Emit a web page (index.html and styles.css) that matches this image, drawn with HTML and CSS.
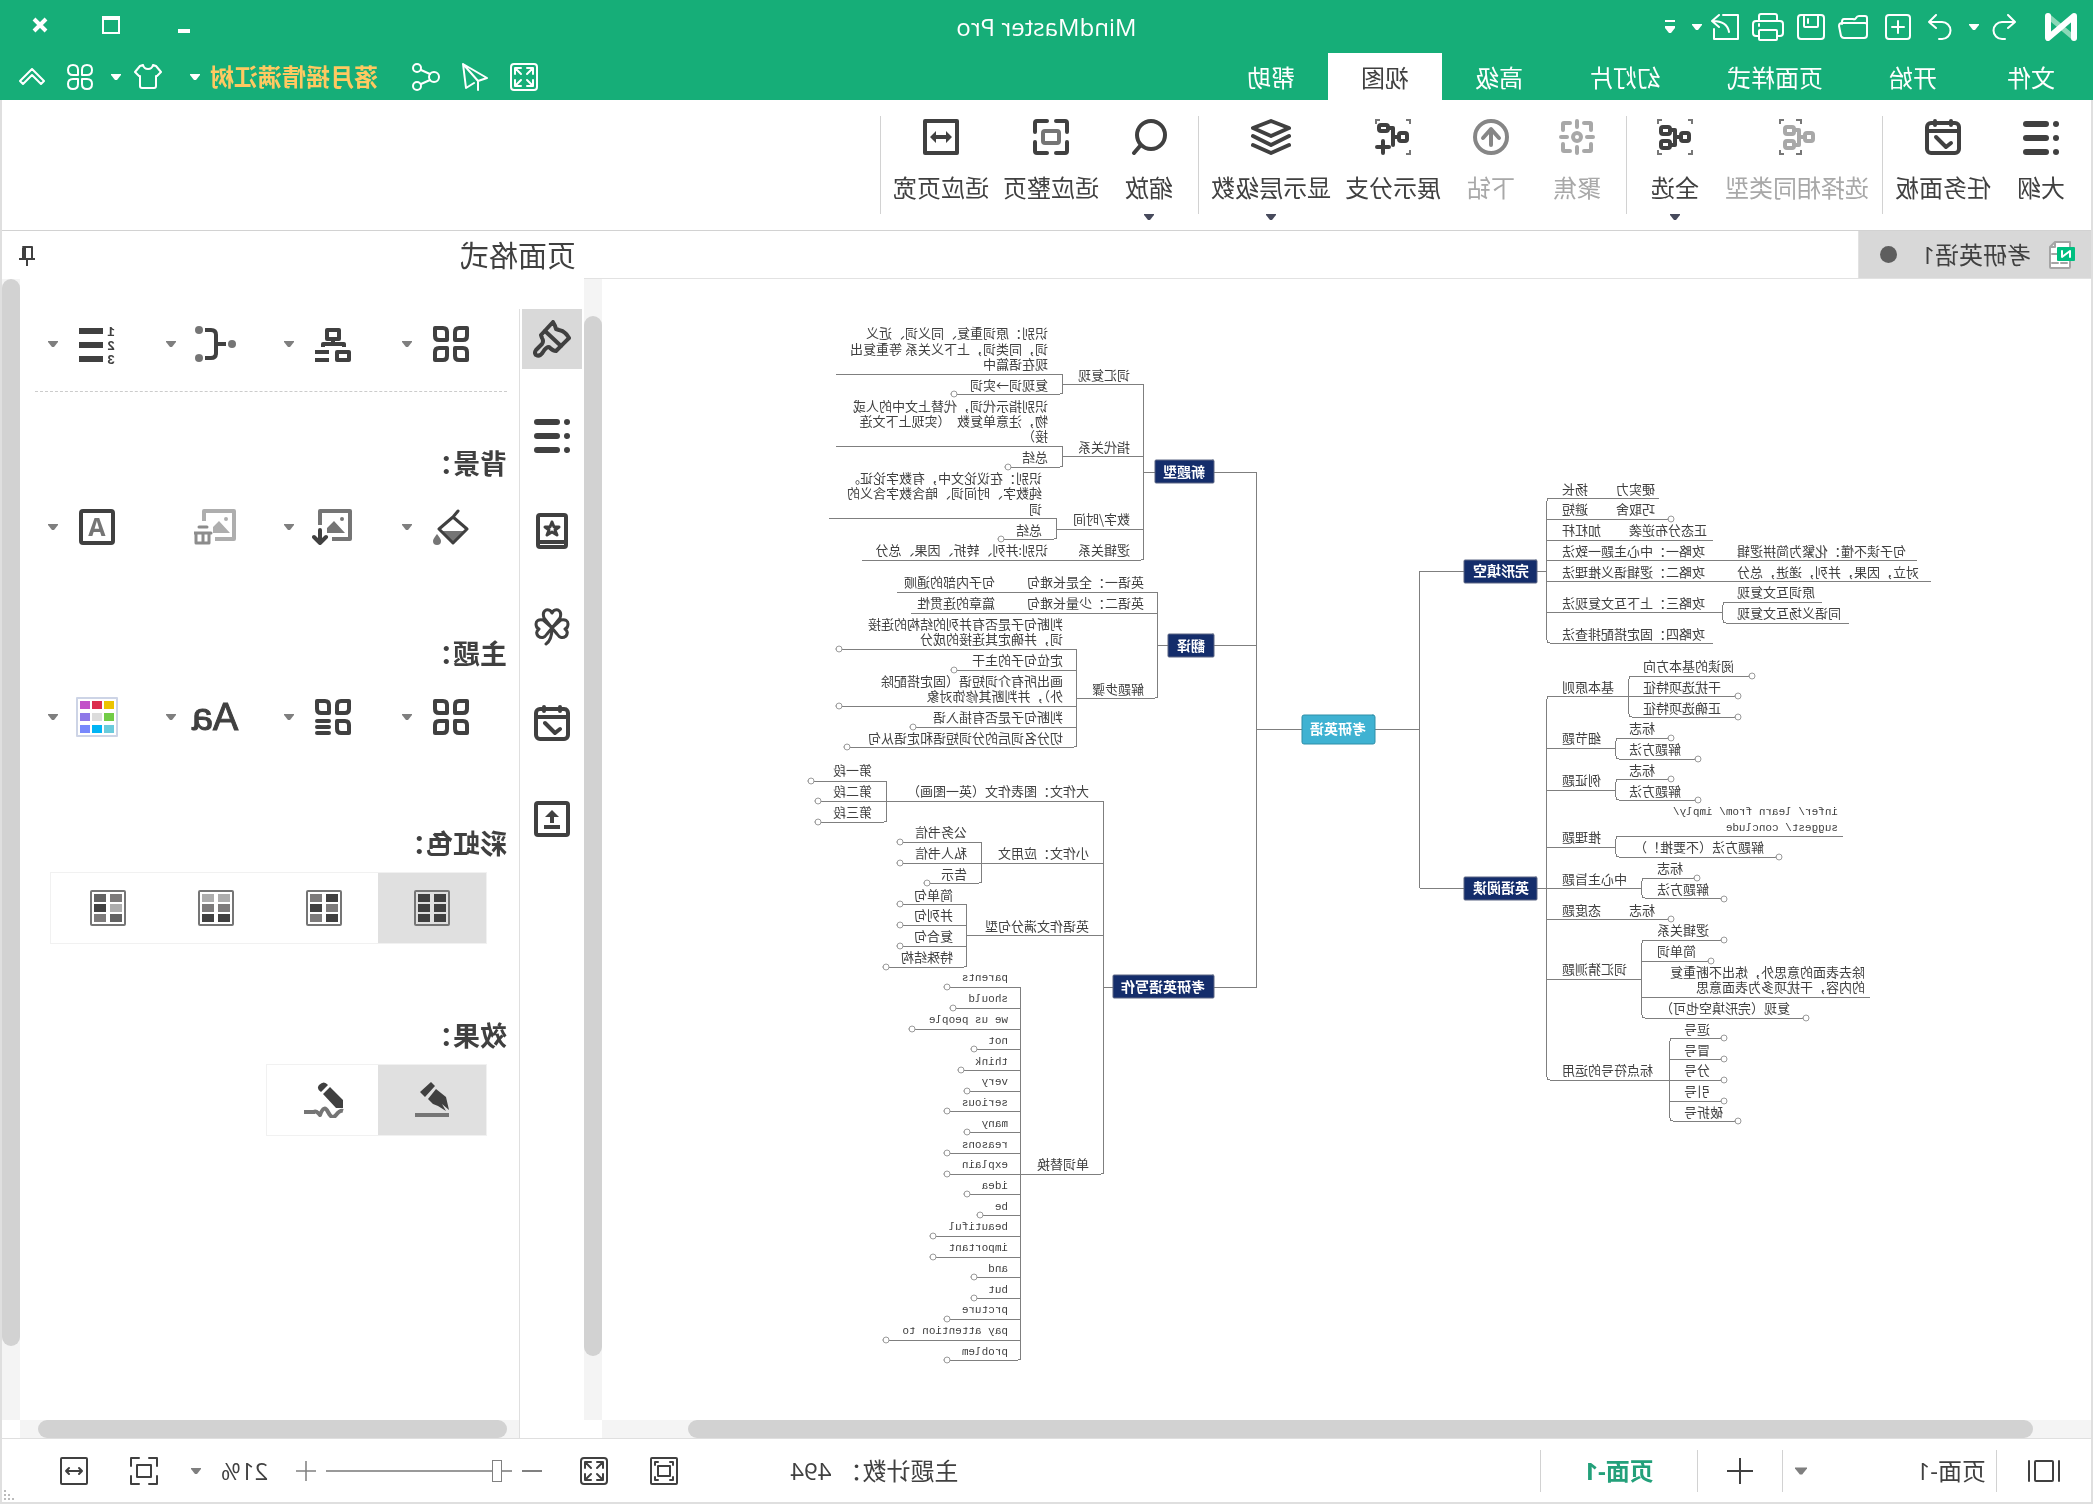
FILE: index.html
```html
<!DOCTYPE html>
<html lang="zh-CN">
<head>
<meta charset="utf-8">
<title>MindMaster Pro</title>
<link rel="stylesheet" href="styles.css">
</head>
<body>
<svg class="sprite" aria-hidden="true">
  <symbol id="caret" viewBox="0 0 10 6"><path d="M0 0H10V1L6 6H4L0 1Z" fill="currentColor"/></symbol>
  <symbol id="undo" viewBox="0 0 24 26"><path d="M8 1L1 8L8 14M1 8H14A8 8 0 0 1 14 25H11" /></symbol>
  <symbol id="redo" viewBox="0 0 24 26"><path d="M16 1L23 8L16 14M23 8H10A8 8 0 0 0 10 25H13" /></symbol>
  <symbol id="new" viewBox="0 0 26 26"><rect x="1" y="1" width="24" height="24" rx="3"/><path d="M13 7V19M7 13H19"/></symbol>
  <symbol id="open" viewBox="0 0 30 26"><path d="M1 11V4Q1 2 3 2H9Q11 2 12 4T15 5H24Q26 5 26 8V10M1 11Q1 9 3 9H26Q29 9 29 12L27 22Q26 24 24 24H4Q1 24 1 21Z"/></symbol>
  <symbol id="save" viewBox="0 0 28 26"><rect x="1" y="1" width="26" height="24" rx="3"/><path d="M7 1V12Q7 13 8 13H20Q21 13 21 12V1M17 5V9"/></symbol>
  <symbol id="print" viewBox="0 0 32 28"><path d="M7 8V3Q7 1 9 1H23Q25 1 25 3V8M7 23H4Q1 23 1 20V11Q1 8 4 8H28Q31 8 31 11V20Q31 23 28 23H25M25 11V13"/><rect x="7" y="17" width="18" height="10" rx="1"/></symbol>
  <symbol id="export" viewBox="0 0 28 26"><path d="M16 1H1V25H25V15M20 1L27 7L20 13M26 7Q12 7 10 18"/></symbol>
  <symbol id="fullscreen" viewBox="0 0 28 28"><rect x="1" y="1" width="26" height="26" rx="3"/><path d="M5 11V5H11M5 5L11 11M17 5H23V11M23 5L17 11M5 17V23H11M5 23L11 17M23 17V23H17M23 23L17 17"/></symbol>
  <symbol id="plane" viewBox="0 0 26 28"><path d="M25 1L1 15L10 18V27M25 1L22 25L14 20M25 1L10 18"/></symbol>
  <symbol id="share" viewBox="0 0 28 28"><circle cx="6" cy="14" r="5"/><circle cx="23" cy="5" r="4"/><circle cx="23" cy="23" r="4"/><path d="M10 11L19 7M10 17L19 21"/></symbol>
  <symbol id="shirt" viewBox="0 0 28 26"><path d="M9 1Q10 5 14 5T19 1L22 2L27 8L23 12H22V22Q22 24 20 24H8Q6 24 6 22V12H5L1 8L6 2Z"/></symbol>
  <symbol id="petals" viewBox="0 0 26 26"><path d="M11 11V6Q11 1 6 1T1 6T6 11ZM15 11V6Q15 1 20 1T25 6T20 11ZM11 15V20Q11 25 6 25T1 20T6 15ZM15 15V20Q15 25 20 25T25 20T20 15Z"/></symbol>
  <symbol id="collapse" viewBox="0 0 26 18"><path d="M1 13L13 1L25 13L22 16L13 7L4 16Z"/></symbol>

  <symbol id="outline" viewBox="0 0 36 36"><path d="M13 5H33M13 19H33M13 33H33" stroke-width="6"/><g class="solid"><circle cx="3" cy="5" r="3"/><circle cx="3" cy="19" r="3"/><circle cx="3" cy="33" r="3"/></g></symbol>
  <symbol id="calendar" viewBox="0 0 36 36"><rect x="2" y="4" width="32" height="30" rx="4"/><path d="M2 12H34M10 2V6M26 2V6M10 24L15 28L25 18"/></symbol>
  <symbol id="same" viewBox="0 0 36 36"><path class="thin" d="M14 5V1H19M31 1H35V5M14 31V35H19M31 35H35V31"/><rect x="2" y="14" width="8" height="8" rx="2"/><rect x="21" y="8" width="9" height="7" rx="2"/><rect x="21" y="22" width="9" height="7" rx="2"/><path d="M10 18H16M21 11H16V26H21"/></symbol>
  <symbol id="all" viewBox="0 0 36 36"><path class="thin" d="M1 5V1H5M31 1H35V5M1 31V35H5M31 35H35V31"/><rect x="4" y="14" width="8" height="8" rx="2"/><rect x="23" y="8" width="9" height="7" rx="2"/><rect x="23" y="22" width="9" height="7" rx="2"/><path d="M12 18H18M23 11H18V26H23"/></symbol>
  <symbol id="focus" viewBox="0 0 36 36"><path d="M4 11V5Q4 4 5 4H11M25 4H31Q32 4 32 5V11M4 25V31Q4 32 5 32H11M25 32H31Q32 32 32 31V25M18 2V8M18 28V34M2 18H8M28 18H34"/><circle cx="18" cy="18" r="4"/></symbol>
  <symbol id="drill" viewBox="0 0 36 36"><circle cx="18" cy="18" r="16"/><path d="M18 26V11M10 19L18 10L26 19"/></symbol>
  <symbol id="branches" viewBox="0 0 36 36"><path class="thin" d="M1 5V1H5M31 1H35V5M1 31V35H5"/><rect x="4" y="14" width="8" height="8" rx="2"/><rect x="23" y="6" width="9" height="6" rx="2"/><path d="M12 18H18M23 9H18V26M28 22V34M22 28H34"/></symbol>
  <symbol id="layers" viewBox="0 0 40 36"><path d="M20 2L38 9L20 17L2 9ZM2 17L20 26L38 17M2 26L20 34L38 26"/></symbol>
  <symbol id="magnifier" viewBox="0 0 36 36"><circle cx="16" cy="16" r="14"/><path d="M27 27L33 34"/></symbol>
  <symbol id="fitpage" viewBox="0 0 36 36"><path d="M2 13V4Q2 2 4 2H13M22 2H32Q34 2 34 4V13M2 23V32Q2 34 4 34H13M22 34H32Q34 34 34 32V23"/><rect class="soft" x="10" y="12" width="16" height="12" rx="2"/></symbol>
  <symbol id="fitwidth" viewBox="0 0 36 36"><rect x="2" y="2" width="32" height="32"/><path d="M11 18H25"/><path class="solid" d="M7 18L13 12V24ZM29 18L23 12V24Z"/></symbol>

  <symbol id="doc" viewBox="0 0 26 28"><path d="M5 1H20L25 6V26Q25 27 24 27H6Q5 27 5 26Z" fill="#fff" stroke="#a5a5a5" stroke-width="2"/><path d="M8 22H14M17 22H23M18 13H23M20 2V6H24" stroke="#a5a5a5" stroke-width="2" fill="none"/><rect y="6" width="18" height="14" rx="1" fill="#00bf80" stroke="none"/><path d="M5 16V10L13 16V10" fill="none" stroke="#fff" stroke-width="2"/></symbol>
  <symbol id="pin" viewBox="0 0 16 20"><path d="M3 1H12M3 1V12M0 13H16M8 14V20" stroke-width="2"/><path d="M11 2V12" stroke-width="4" stroke-linecap="butt"/></symbol>

  <symbol id="brush" viewBox="0 0 38 38"><path d="M18 2Q16 5 15 9L12 10Q6 11 2 18L15 31Q18 31 22 27Q25 27 28 32Q31 37 35 35Q37 33 35 30L29 24Q27 21 29 18L30 15Z"/><path d="M26 11L10 26"/></symbol>
  <symbol id="book" viewBox="0 0 32 36"><rect x="2" y="2" width="28" height="32" rx="2"/><path d="M2 29H30"/><path d="M16 9L18 14H23L19 17L21 22L16 19L11 22L13 17L9 14H14Z" stroke-width="3"/></symbol>
  <symbol id="clover" viewBox="0 0 36 38"><path stroke-width="3" d="M18 20L10 10Q8 4 12 2Q16 1 18 5Q20 1 24 2Q28 4 26 10ZM18 20L9 12Q2 11 2 16Q2 20 5 21Q1 24 4 28Q9 32 13 26ZM18 20L27 12Q34 11 34 16Q34 20 31 21Q35 24 32 28Q27 32 23 26ZM18 20Q18 32 24 36"/></symbol>
  <symbol id="upload" viewBox="0 0 36 36"><rect x="2" y="2" width="32" height="32" rx="2"/><path d="M18 22V14M10 26H26" stroke-linecap="butt"/><path class="solid" d="M18 9L25 16H11Z"/></symbol>

  <symbol id="tiles" viewBox="0 0 36 36"><path d="M2 2H10Q14 2 14 6V14H6Q2 14 2 10ZM34 2H26Q22 2 22 6V14H30Q34 14 34 10ZM2 34H10Q14 34 14 30V22H6Q2 22 2 26ZM34 34H26Q22 34 22 30V22H30Q34 22 34 26Z"/></symbol>
  <symbol id="tilebars" viewBox="0 0 36 36"><path d="M2 2H10Q14 2 14 6V14H6Q2 14 2 10ZM34 2H26Q22 2 22 6V14H30Q34 14 34 10ZM2 34H10Q14 34 14 30V22H6Q2 22 2 26ZM22 22H34M22 28H34M22 34H34"/></symbol>
  <symbol id="tree" viewBox="0 0 36 36"><g stroke-linecap="butt"><rect x="12" y="4" width="12" height="9"/><path d="M18 13V18M7 21V18H28V21M22 26H36M22 34H36"/><rect x="2" y="26" width="12" height="8"/></g></symbol>
  <symbol id="bracket" viewBox="0 0 42 36"><path d="M10 18H20M31 4H25Q20 4 20 9V27Q20 32 25 32H31" stroke-linecap="butt"/><g class="softsolid"><circle cx="4" cy="18" r="4"/><circle cx="37" cy="4" r="4"/><circle cx="37" cy="32" r="4"/></g></symbol>
  <symbol id="numbers" viewBox="0 0 36 40"><path d="M12 7H36M12 21H36M12 35H36" stroke-width="6" stroke-linecap="butt"/><g class="digits"><text x="0" y="12">1</text><text x="0" y="26">2</text><text x="0" y="40">3</text></g></symbol>
  <symbol id="bucket" viewBox="0 0 36 36"><path class="softsolid" d="M4 22H28L16 34Z"/><path d="M16 8L30 20L16 34L2 20ZM16 8L11 2" stroke-width="3"/><path class="softsolid" d="M32 25Q36 30 36 32A4 4 0 0 1 28 32Q28 30 32 25Z"/></symbol>
  <symbol id="imagein" viewBox="0 0 42 36"><g class="soft"><path d="M22 30H4V2H34V16" stroke-linecap="butt"/></g><path class="softsolid" d="M9 24L20 12L27 19V24ZM10 10A2 2 0 0 1 14 10A2 2 0 0 1 10 10Z"/><path d="M34 21V34M28 28L34 34L40 28"/></symbol>
  <symbol id="imagedel" viewBox="0 0 42 36"><g opacity=".7"><path d="M21 30H2V2H32V12" stroke-linecap="butt"/><path class="solid" d="M6 24L17 12L23 18V24ZM8 10A2 2 0 0 1 12 10A2 2 0 0 1 8 10Z"/></g><path d="M29 18H37M25 24H42M27 24V34H40V24M33 24V34" stroke-width="3"/></symbol>
  <symbol id="abox" viewBox="0 0 36 36"><rect x="2" y="2" width="32" height="32" rx="2"/><text class="letter" x="18" y="27" text-anchor="middle">A</text></symbol>
  <symbol id="palette" viewBox="0 0 42 40"><rect x="1" y="1" width="40" height="38" fill="#fff" stroke="#cdd4e6" stroke-width="2"/><g stroke="none"><path fill="#ecc400" d="M4 4h10v8H4z"/><path fill="#dc2e4e" d="M16 4h10v8H16z"/><path fill="#c250c8" d="M28 4h10v8H28z"/><path fill="#72cc46" d="M4 16h10v8H4z"/><path fill="#dcdcdc" d="M16 16h10v8H16z"/><path fill="#8f78e8" d="M28 16h10v8H28z"/><path fill="#6acbdc" d="M4 28h10v8H4z"/><path fill="#00b4f5" d="M16 28h10v8H16z"/><path fill="#7888fc" d="M28 28h10v8H28z"/></g></symbol>
  <symbol id="frame" viewBox="0 0 36 36"><rect x="1" y="1" width="34" height="34" rx="1" stroke="#757575" stroke-width="2"/></symbol>
  <symbol id="pen" viewBox="0 0 36 36"><path class="solid" d="M19 0L30 10L25 15L15 4ZM14 7L22 17L17 22L12 24L4 29L8 22L1 28L4 15Z"/><path class="soft" d="M1 33H35" stroke-linecap="butt"/></symbol>
  <symbol id="pencil" viewBox="0 0 40 36"><path class="solid" d="M16 3Q20 -2 25 3Q28 7 23 10ZM14 5L21 12L8 26H1V18Z"/><path class="soft" d="M1 29Q4 28 8 33T16 30T24 33Q28 28 30 30H40" stroke-linecap="butt"/></symbol>

  <symbol id="pages" viewBox="0 0 32 22"><rect x="7" y="1" width="18" height="20" rx="1"/><path d="M1 1V21M31 1V21"/></symbol>
  <symbol id="plus" viewBox="0 0 26 26"><path d="M13 0V26M0 13H26"/></symbol>
  <symbol id="minus" viewBox="0 0 20 20"><path d="M0 10H20"/></symbol>
  <symbol id="fit28" viewBox="0 0 28 28"><path d="M1 9V1H9M19 1H27V9M1 19V27H9M19 27H27V19"/><rect x="7" y="8" width="14" height="12"/></symbol>
  <symbol id="present" viewBox="0 0 28 28"><rect x="1" y="1" width="26" height="26" rx="1"/><path d="M5 8V5H8M20 5H23V8M5 20V23H8M20 23H23V20"/><rect x="8" y="9" width="12" height="10"/></symbol>
  <symbol id="width28" viewBox="0 0 28 28"><rect x="1" y="1" width="26" height="26" rx="1"/><path d="M6 14H22M9 11L6 14L9 17M19 11L22 14L19 17"/></symbol>
</svg>

<div class="window">
  <header class="titlebar">
    <div class="toprow">
      <div class="quick">
        <svg class="logo" viewBox="0 0 32 28" width="32" height="28" aria-hidden="true"><path d="M3 25L29 3" stroke="#8cd8b8" stroke-width="5"/><path d="M3 25V3L29 25V3" stroke="#fff" stroke-width="6" stroke-linejoin="round" stroke-linecap="round" fill="none"/></svg>
        <button class="q-undo" aria-label="撤销"><svg width="24" height="26"><use href="#undo"/></svg></button>
        <button aria-label="撤销记录"><svg width="10" height="6"><use href="#caret"/></svg></button>
        <button class="q-redo" aria-label="恢复"><svg width="24" height="26"><use href="#redo"/></svg></button>
        <button class="q-new" aria-label="新建"><svg width="26" height="26"><use href="#new"/></svg></button>
        <button aria-label="打开"><svg width="30" height="26"><use href="#open"/></svg></button>
        <button aria-label="保存"><svg width="28" height="26"><use href="#save"/></svg></button>
        <button aria-label="打印"><svg width="32" height="28"><use href="#print"/></svg></button>
        <button class="q-export" aria-label="导出"><svg width="28" height="26"><use href="#export"/></svg></button>
        <button aria-label="导出选项"><svg width="10" height="6"><use href="#caret"/></svg></button>
        <button class="q-more" aria-label="自定义工具栏"><svg width="10" height="14" viewBox="0 0 10 14"><path d="M0 6H10V8L6 13H4L0 8Z" fill="#fff" class="nostroke"/><path d="M0 1H10"/></svg></button>
      </div>
      <h1>MindMaster Pro</h1>
      <div class="winctl">
        <button class="min" aria-label="最小化"><svg width="12" height="22" viewBox="0 0 12 22"><path d="M0 15H12V19H0Z" fill="#fff" class="nostroke"/></svg></button>
        <button aria-label="最大化"><svg width="18" height="18" viewBox="0 0 18 18"><path d="M0 0H18V18H0ZM2 4V16H16V4Z" fill="#fff" fill-rule="evenodd" class="nostroke"/></svg></button>
        <button aria-label="关闭"><svg width="16" height="16" viewBox="0 0 16 16"><path d="M2 2L14 14M14 2L2 14" class="heavy"/></svg></button>
      </div>
    </div>
    <div class="tabrow">
      <nav class="tabs">
        <button class="file">文件</button><button>开始</button><button>页面样式</button><button>幻灯片</button><button>高级</button><button class="active">视图</button><button>帮助</button>
      </nav>
      <div class="account">
        <button aria-label="全屏"><svg width="28" height="28"><use href="#fullscreen"/></svg></button>
        <button aria-label="发送"><svg width="26" height="28"><use href="#plane"/></svg></button>
        <button aria-label="分享"><svg width="28" height="28"><use href="#share"/></svg></button>
        <button class="user">落月摇情满江树<svg width="10" height="6"><use href="#caret"/></svg></button>
        <button class="skin" aria-label="皮肤"><svg width="28" height="26"><use href="#shirt"/></svg><svg width="10" height="6"><use href="#caret"/></svg></button>
        <button aria-label="社区"><svg width="26" height="26"><use href="#petals"/></svg></button>
        <button aria-label="收起功能区"><svg width="26" height="18"><use href="#collapse"/></svg></button>
      </div>
    </div>
  </header>

  <div class="frame">
    <div class="ribbon">
      <button><svg width="36" height="36"><use href="#outline"/></svg>大纲</button>
      <button><svg width="36" height="36"><use href="#calendar"/></svg>任务面板</button>
      <i class="rule"></i>
      <button class="off"><svg width="36" height="36"><use href="#same"/></svg>选择相同类型</button>
      <button><svg width="36" height="36"><use href="#all"/></svg>全选<svg class="more" width="10" height="6"><use href="#caret"/></svg></button>
      <i class="rule"></i>
      <button class="off"><svg width="36" height="36"><use href="#focus"/></svg>聚焦</button>
      <button class="off drill"><svg width="36" height="36"><use href="#drill"/></svg>下钻</button>
      <button><svg width="36" height="36"><use href="#branches"/></svg>展示分支</button>
      <button><svg width="40" height="36"><use href="#layers"/></svg>显示层级数<svg class="more" width="10" height="6"><use href="#caret"/></svg></button>
      <i class="rule"></i>
      <button><svg width="36" height="36"><use href="#magnifier"/></svg>缩放<svg class="more" width="10" height="6"><use href="#caret"/></svg></button>
      <button><svg width="36" height="36"><use href="#fitpage"/></svg>适应整页</button>
      <button><svg width="36" height="36"><use href="#fitwidth"/></svg>适应页宽</button>
      <i class="rule"></i>
    </div>

    <div class="workspace">
      <section class="editor">
        <div class="doctabs">
          <button class="doctab"><svg width="26" height="28"><use href="#doc"/></svg><span>考研英语1</span><i class="dot"></i></button>
        </div>
        <div class="view">
          <div class="canvas">
<svg class="map" viewBox="157 279 1180 1141" width="1180" height="1141" role="img" aria-label="考研英语">
  <defs><circle id="k" r="3"/></defs>
  <g class="lines">
    <path d="M718 729H673M673 571V888M673 571H629M673 888H629M556 571H546M556 888H546"/>
    <path d="M791 729H836M879 472H836V987H879M836 645H879M938 472H949M925 645H935M980 987H989"/>
    <path d="M434 498H543Q546 498 546 501V640Q546 643 543 643H380M425 519H546M380 540H546M176 560H546M162 581H546M370 612H546M271 602H367Q370 602 370 605V620Q370 623 367 623H244"/>
    <path d="M358 696H543Q546 696 546 699V1077Q546 1080 543 1080H372M477 748H546M477 790H546M477 847H546M451 888H546M425 919H546M451 979H546"/>
    <path d="M344 676H461Q464 676 464 679V714Q464 717 461 717H358M425 738H474Q477 738 477 741V756Q477 759 474 759H398M425 779H474Q477 779 477 782V797Q477 800 474 800H398M250 836H474Q477 836 477 839V854Q477 857 474 857H317M399 878H448Q451 878 451 881V895Q451 898 448 898H372"/>
    <path d="M372 940H448Q451 940 451 943V1015Q451 1018 448 1018H290M385 961H451M223 997H451M372 1038H420Q423 1038 423 1041V1118Q423 1121 420 1121H358M372 1059H423M372 1101H423"/>
    <path d="M1030 384H952Q949 384 949 387V557Q949 560 952 560H1231M949 456H1030M949 529H1036M1257 374H1033Q1030 374 1030 377V391Q1030 394 1033 394H1136M1257 446H1033Q1030 446 1030 449V464Q1030 467 1033 467H1082M1264 518H1039Q1036 518 1036 521V536Q1036 539 1039 539H1089"/>
    <path d="M1196 592H938Q935 592 935 595V695Q935 698 938 698H1016M935 613H1182M1251 649H1019Q1016 649 1016 652V744Q1016 747 1019 747H1243M1016 670H1136M1016 706H1251M1016 727H1177"/>
    <path d="M1272 801H992Q989 801 989 804V1171Q989 1174 992 1174H1143M989 863H1190M989 935H1126M1279 781H1209Q1206 781 1206 784V819Q1206 822 1209 822H1272M1190 842H1114Q1111 842 1111 845V880Q1111 883 1114 883H1163M1190 904H1129Q1126 904 1126 907V964Q1126 967 1129 967H1204M1126 925H1190M1126 946H1190"/>
    <path d="M1143 987H1075Q1072 987 1072 990V1357Q1072 1360 1075 1360H1143M1072 1008H1137M1072 1029H1178M1072 1049H1116M1072 1070H1129M1072 1091H1123M1072 1111H1143M1072 1132H1123M1072 1153H1143M1072 1194H1123M1072 1215H1110M1072 1236H1157M1072 1257H1157M1072 1277H1116M1072 1298H1116M1072 1319H1143M1072 1340H1204"/>
  </g>
  <g class="knobs">
    <use href="#k" x="422" y="519"/><use href="#k" x="341" y="676"/><use href="#k" x="355" y="696"/><use href="#k" x="355" y="717"/><use href="#k" x="422" y="738"/><use href="#k" x="395" y="759"/><use href="#k" x="422" y="779"/><use href="#k" x="395" y="800"/><use href="#k" x="314" y="857"/><use href="#k" x="396" y="878"/><use href="#k" x="369" y="899"/><use href="#k" x="422" y="919"/><use href="#k" x="369" y="940"/><use href="#k" x="382" y="961"/><use href="#k" x="287" y="1018"/><use href="#k" x="369" y="1038"/><use href="#k" x="369" y="1059"/><use href="#k" x="369" y="1080"/><use href="#k" x="369" y="1101"/><use href="#k" x="355" y="1121"/>
    <use href="#k" x="1139" y="394"/><use href="#k" x="1085" y="467"/><use href="#k" x="1092" y="539"/><use href="#k" x="1254" y="649"/><use href="#k" x="1139" y="670"/><use href="#k" x="1254" y="706"/><use href="#k" x="1180" y="727"/><use href="#k" x="1246" y="747"/><use href="#k" x="1282" y="781"/><use href="#k" x="1275" y="801"/><use href="#k" x="1275" y="822"/><use href="#k" x="1193" y="842"/><use href="#k" x="1193" y="863"/><use href="#k" x="1166" y="883"/><use href="#k" x="1193" y="904"/><use href="#k" x="1193" y="925"/><use href="#k" x="1193" y="946"/><use href="#k" x="1207" y="967"/>
    <use href="#k" x="1146" y="987"/><use href="#k" x="1140" y="1008"/><use href="#k" x="1181" y="1029"/><use href="#k" x="1119" y="1049"/><use href="#k" x="1132" y="1070"/><use href="#k" x="1126" y="1091"/><use href="#k" x="1146" y="1111"/><use href="#k" x="1126" y="1132"/><use href="#k" x="1146" y="1153"/><use href="#k" x="1146" y="1174"/><use href="#k" x="1126" y="1194"/><use href="#k" x="1113" y="1215"/><use href="#k" x="1160" y="1236"/><use href="#k" x="1160" y="1257"/><use href="#k" x="1119" y="1277"/><use href="#k" x="1119" y="1298"/><use href="#k" x="1146" y="1319"/><use href="#k" x="1207" y="1340"/><use href="#k" x="1146" y="1360"/>
  </g>
  <g class="topics">
    <rect class="root" x="718" y="715" width="73" height="29" rx="2"/><text x="755" y="734">考研英语</text>
    <rect x="556" y="560" width="73" height="23" rx="1"/><text x="592" y="576">完形填空</text>
    <rect x="556" y="877" width="73" height="23" rx="1"/><text x="592" y="893">英语阅读</text>
    <rect x="879" y="460" width="59" height="23" rx="1"/><text x="909" y="477">新题型</text>
    <rect x="879" y="634" width="46" height="23" rx="1"/><text x="902" y="651">翻译</text>
    <rect x="879" y="975" width="101" height="23" rx="1"/><text x="930" y="992">考研英语写作</text>
  </g>
  <g class="left">
    <text x="531" y="494">扬长</text><text x="477" y="494">硬实力</text>
    <text x="531" y="514">避短</text><text x="477" y="514">巧取舍</text>
    <text x="531" y="535">加杠杆</text><text x="464" y="535">正态分布逆袭</text>
    <text x="531" y="556">攻略一：中心主题一致法</text><text x="356" y="556">句子读不懂：化繁为简拼逻辑</text>
    <text x="531" y="577">攻略二：逻辑语义推理法</text><text x="356" y="577">对立，因果，并列，递进，总分</text>
    <text x="531" y="608">攻略三：上下互文复现法</text><text x="356" y="597">原词互文复现</text><text x="356" y="618">同语义场互文复现</text>
    <text x="531" y="639">攻略四：固定搭配排查法</text>
    <text x="531" y="692">基本原则</text><text x="450" y="671">阅读的基本方向</text><text x="450" y="692">干扰选项特征</text><text x="450" y="713">正确选项特征</text>
    <text x="531" y="743">细节题</text><text x="464" y="733">标志</text><text x="464" y="754">解题方法</text>
    <text x="531" y="785">例证题</text><text x="464" y="775">标志</text><text x="464" y="796">解题方法</text>
    <text x="531" y="842">推理题</text>
    <text x="531" y="884">中心主旨题</text><text x="436" y="873">标志</text><text x="436" y="894">解题方法</text>
    <text x="531" y="915">态度题</text><text x="464" y="915">标志</text>
    <text x="531" y="974">词汇猜测题</text><text x="436" y="935">逻辑关系</text><text x="436" y="956">简单词</text>
    <text x="531" y="1075">标点符号的运用</text><text x="409" y="1034">逗号</text><text x="409" y="1055">冒号</text><text x="409" y="1075">分号</text><text x="409" y="1096">引号</text><text x="409" y="1117">破折号</text>
  </g>
  <g>
    <text class="en" x="255" y="815">infer/ learn from/ imply/</text><text class="en" x="255" y="831">suggest/ conclude</text>
    <text x="329" y="852">解题方法（不要推！）</text>
    <text x="228" y="977">除去表面的意思外，炼出不断重复</text><text x="228" y="992">的内容，干扰项多为表面意思</text>
    <text x="303" y="1013">复现（完形填空也可）</text>
    <text x="963" y="380">词汇复现</text>
    <text x="1045" y="338">识别：原词重复、同义词、近义</text><text x="1045" y="354">词，同类词，上下义关系 等重复出</text><text x="1045" y="369">现在语篇中</text><text x="1045" y="390">复现词→实词</text>
    <text x="963" y="452">指代关系</text>
    <text x="1045" y="411">识别指示代词，代替上文中的人或</text><text x="1045" y="426">物，注意单复数　（实现上下文连</text><text x="1045" y="441">接）</text><text x="1045" y="462">总结</text>
    <text x="963" y="524">数字/时间</text>
    <text x="1051" y="483">识别：在议论文中，有数字论证。</text><text x="1051" y="498">纯数字、时间词、暗含数字含义的</text><text x="1051" y="514">词</text><text x="1051" y="535">总结</text>
    <text x="963" y="555">逻辑关系</text><text x="1045" y="555">识别:并列、转折、因果、总分</text>
    <text x="949" y="587">英语一：全是长难句</text><text x="1098" y="587">句子内部的通顺</text>
    <text x="949" y="608">英语二：少量长难句</text><text x="1098" y="608">篇章的连贯性</text>
    <text x="949" y="694">解题步骤</text>
    <text x="1030" y="629">判断句子是否有并列的结构的连接</text><text x="1030" y="644">词，并确定其连接的成分</text>
    <text x="1030" y="665">定位句子的主干</text>
    <text x="1030" y="686">画出所有介词短语（固定搭配除</text><text x="1030" y="701">外），并判断其修饰对象</text>
    <text x="1030" y="722">判断句子是否有插入语</text>
    <text x="1030" y="743">切分名词后的分词短语和定语从句</text>
    <text x="1004" y="796">大作文：图表作文（英一图画）</text><text x="1221" y="775">第一段</text><text x="1221" y="796">第二段</text><text x="1221" y="817">第三段</text>
    <text x="1004" y="858">小作文：应用文</text><text x="1126" y="837">公务书信</text><text x="1126" y="858">私人书信</text><text x="1126" y="879">告示</text>
    <text x="1004" y="931">英语作文满分句型</text><text x="1140" y="900">简单句</text><text x="1140" y="920">并列句</text><text x="1140" y="941">复合句</text><text x="1140" y="962">特殊结构</text>
    <text x="1004" y="1169">单词替换</text>
  </g>
  <g class="en">
    <text x="1085" y="981">parents</text><text x="1085" y="1002">should</text><text x="1085" y="1023">we us people</text><text x="1085" y="1044">not</text><text x="1085" y="1065">think</text><text x="1085" y="1085">very</text><text x="1085" y="1106">serious</text><text x="1085" y="1127">many</text><text x="1085" y="1148">reasons</text><text x="1085" y="1168">explain</text><text x="1085" y="1189">idea</text><text x="1085" y="1210">be</text><text x="1085" y="1230">beautiful</text><text x="1085" y="1251">important</text><text x="1085" y="1272">and</text><text x="1085" y="1293">but</text><text x="1085" y="1313">prcture</text><text x="1085" y="1334">pay attention to</text><text x="1085" y="1355">problem</text>
  </g>
</svg>
          </div>
          <div class="vbar"><i></i></div>
          <div class="hbar"><i></i></div>
        </div>
      </section>

      <aside class="panel">
        <div class="panelhead"><h2>页面格式</h2><button aria-label="固定面板"><svg width="16" height="20"><use href="#pin"/></svg></button></div>
        <div class="panelbody">
          <div class="side">
            <button class="active" aria-label="页面格式"><svg width="38" height="38"><use href="#brush"/></svg></button>
            <button aria-label="大纲"><svg width="36" height="36"><use href="#outline"/></svg></button>
            <button aria-label="图标"><svg width="32" height="36"><use href="#book"/></svg></button>
            <button aria-label="剪贴画"><svg width="36" height="38"><use href="#clover"/></svg></button>
            <button aria-label="任务"><svg width="36" height="36"><use href="#calendar"/></svg></button>
            <button aria-label="导出"><svg width="36" height="36"><use href="#upload"/></svg></button>
          </div>
          <div class="props">
            <div class="cells first">
              <button aria-label="结构"><span><svg width="36" height="36"><use href="#tiles"/></svg></span><svg class="c" width="10" height="6"><use href="#caret"/></svg></button>
              <button aria-label="布局"><span><svg width="36" height="36"><use href="#tree"/></svg></span><svg class="c" width="10" height="6"><use href="#caret"/></svg></button>
              <button aria-label="连接线"><span><svg width="42" height="36"><use href="#bracket"/></svg></span><svg class="c" width="10" height="6"><use href="#caret"/></svg></button>
              <button aria-label="编号"><span><svg width="36" height="40"><use href="#numbers"/></svg></span><svg class="c" width="10" height="6"><use href="#caret"/></svg></button>
            </div>
            <section>
              <h3>背景：</h3>
              <div class="cells">
                <button aria-label="背景颜色"><span><svg width="36" height="36"><use href="#bucket"/></svg></span><svg class="c" width="10" height="6"><use href="#caret"/></svg></button>
                <button aria-label="插入背景图"><span><svg width="42" height="36"><use href="#imagein"/></svg></span><svg class="c" width="10" height="6"><use href="#caret"/></svg></button>
                <button class="dim" aria-label="删除背景图"><span><svg width="42" height="36"><use href="#imagedel"/></svg></span></button>
                <button aria-label="水印"><span><svg width="36" height="36"><use href="#abox"/></svg></span><svg class="c" width="10" height="6"><use href="#caret"/></svg></button>
              </div>
            </section>
            <section>
              <h3>主题：</h3>
              <div class="cells">
                <button aria-label="主题"><span><svg width="36" height="36"><use href="#tiles"/></svg></span><svg class="c" width="10" height="6"><use href="#caret"/></svg></button>
                <button aria-label="主题样式"><span><svg width="36" height="36"><use href="#tilebars"/></svg></span><svg class="c" width="10" height="6"><use href="#caret"/></svg></button>
                <button aria-label="主题字体"><span class="aa">Aa</span><svg class="c" width="10" height="6"><use href="#caret"/></svg></button>
                <button aria-label="主题颜色"><span><svg width="42" height="40"><use href="#palette"/></svg></span><svg class="c" width="10" height="6"><use href="#caret"/></svg></button>
              </div>
            </section>
            <section class="tight">
              <h3>彩虹色：</h3>
              <div class="segs">
                <button class="on" aria-label="单色"><svg width="36" height="36"><use href="#frame"/><path class="d1" d="M4 4h12v8H4zM20 4h12v8H20zM4 14h12v8H4zM20 14h12v8H20zM4 24h12v8H4zM20 24h12v8H20z"/></svg></button>
                <button aria-label="彩虹色一"><svg width="36" height="36"><use href="#frame"/><path class="d1" d="M4 4h12v8H4zM20 14h12v8H20zM4 24h12v8H4z"/><path class="d3" d="M20 4h12v8H20zM4 14h12v8H4zM20 24h12v8H20z"/></svg></button>
                <button aria-label="彩虹色二"><svg width="36" height="36"><use href="#frame"/><path class="d4" d="M4 4h12v8H4zM20 4h12v8H20z"/><path class="d3" d="M4 14h12v8H4zM20 14h12v8H20z"/><path class="d1" d="M4 24h12v8H4zM20 24h12v8H20z"/></svg></button>
                <button aria-label="彩虹色三"><svg width="36" height="36"><use href="#frame"/><path class="d3" d="M4 4h12v8H4zM20 24h12v8H20z"/><path class="d2" d="M20 4h12v8H20zM4 24h12v8H4z"/><path class="d4" d="M4 14h12v8H4z"/><path class="d1" d="M20 14h12v8H20z"/></svg></button>
              </div>
            </section>
            <section class="tight">
              <h3>效果：</h3>
              <div class="segs">
                <button class="on" aria-label="标准"><svg width="36" height="36"><use href="#pen"/></svg></button>
                <button aria-label="手绘"><svg width="40" height="36"><use href="#pencil"/></svg></button>
              </div>
            </section>
          </div>
          <div class="pv"><i></i></div>
          <div class="ph"><i></i></div>
        </div>
      </aside>
    </div>

    <footer class="status">
      <button class="pagesicon" aria-label="页面列表"><svg width="32" height="22"><use href="#pages"/></svg></button>
      <i class="bar"></i>
      <label class="pagesel"><select aria-label="当前页面"><option>页面-1</option></select><svg class="c" width="12" height="8"><use href="#caret"/></svg></label>
      <i class="bar"></i>
      <button class="add" aria-label="添加页面"><svg width="26" height="26"><use href="#plus"/></svg></button>
      <i class="bar"></i>
      <button class="pagetab">页面-1</button>
      <i class="bar"></i>
      <p class="count"><span>主题计数：</span><span>494</span></p>
      <div class="zoomtools">
        <button aria-label="演示"><svg width="28" height="28"><use href="#present"/></svg></button>
        <button aria-label="全屏"><svg width="28" height="28"><use href="#fullscreen"/></svg></button>
        <div class="zoomer">
          <button aria-label="缩小"><svg width="20" height="20"><use href="#minus"/></svg></button>
          <input type="range" min="0" max="100" value="6" aria-label="缩放">
          <button aria-label="放大"><svg width="20" height="20"><use href="#plus"/></svg></button>
        </div>
        <button class="percent">21%<svg class="c" width="10" height="8"><use href="#caret"/></svg></button>
        <button class="z1" aria-label="适应整页"><svg width="28" height="28"><use href="#fit28"/></svg></button>
        <button aria-label="适应页宽"><svg width="28" height="28"><use href="#width28"/></svg></button>
      </div>
      <svg class="grip" width="10" height="10" viewBox="0 0 10 10"><path d="M8 0h2v2H8zM4 4h2v2H4zM8 4h2v2H8zM0 8h2v2H0zM4 8h2v2H4zM8 8h2v2H8z"/></svg>
    </footer>
  </div>
</div>
</body>
</html>
```

FILE: styles.css
```css
* { box-sizing: border-box; }
body {
  margin: 0;
  font-family: "Open Sans", "Noto Sans CJK SC", sans-serif;
  font-size: 24px;
  line-height: 36px;
  color: #404040;
  background: #fff;
}
h1, h2, h3, p { margin: 0; font-weight: 400; }
button, select, input { font: inherit; color: inherit; }
button {
  display: flex;
  align-items: center;
  justify-content: center;
  padding: 0;
  border: 0;
  background: none;
  white-space: nowrap;
}
svg {
  display: block;
  flex: none;
  fill: none;
  stroke: currentColor;
  stroke-width: 4;
  stroke-linecap: round;
  stroke-linejoin: round;
}
.sprite { display: none; }
#caret, .nostroke { stroke: none; }
.thin { stroke-width: 2; stroke: #777; stroke-linecap: butt; stroke-linejoin: miter; }
.solid { fill: currentColor; stroke: none; }
.soft { stroke: #757575; }
.softsolid { fill: #757575; stroke: none; }
.digits, .letter { fill: currentColor; stroke: none; font: 700 13px "Liberation Mono", monospace; }
.letter { fill: #757575; font: 700 25px "Open Sans", sans-serif; }

/* the whole window is shown in mirror view */
.window {
  display: flex;
  flex-direction: column;
  min-height: 100vh;
  transform: scaleX(-1);
}

/* title bar */
.titlebar { background: #16ae78; color: #fff; }
.titlebar svg { stroke-width: 2; }
.toprow {
  display: grid;
  grid-template-columns: 1fr auto 1fr;
  align-items: center;
  height: 53px;
}
h1 { font-size: 24px; }
.quick { display: flex; align-items: center; padding-left: 16px; gap: 13px; }
.q-undo { margin-left: 16px; }
.q-redo { margin: 0 4px; }
.q-new { margin-right: 4px; }
.q-export { margin-right: -4px; }
.q-more { margin-left: 4px; }
.winctl { display: flex; align-items: center; justify-content: flex-end; gap: 54px; padding: 0 32px 4px 0; }
.winctl .min { margin-right: 4px; }
.titlebar .heavy { stroke-width: 4; stroke-linecap: butt; }
.tabrow { display: flex; justify-content: space-between; height: 47px; }
.tabs { display: flex; padding-left: 5px; }
.tabs button { padding: 3px 33px 0; }
.tabs .file { margin-right: 4px; }
.tabs .active { background: #fff; color: #404040; }
.account { display: flex; align-items: center; gap: 22px; padding-right: 19px; }
.account .user { gap: 10px; margin: 0 6px 0 12px; font-weight: 700; color: #ffc961; }
.account .user svg { color: #fff; }
.account .skin { gap: 13px; margin-right: -4px; }

/* window frame */
.frame {
  display: flex;
  flex: 1;
  flex-direction: column;
  border: solid #dfdfdf;
  border-width: 0 2px 2px;
}
.ribbon {
  display: flex;
  height: 131px;
  padding-left: 7px;
  border-bottom: 1px solid #d2d2d2;
}
.ribbon button {
  flex-direction: column;
  justify-content: flex-start;
  min-width: 86px;
  padding: 19px 7px 0;
  line-height: 36px;
}
.ribbon button svg:first-child { margin-bottom: 15px; }
.ribbon .off { color: #a8a8a8; }
.ribbon .off .thin { stroke: #a8a8a8; }
.ribbon .drill svg { color: #868686; }
.ribbon .more { margin-top: 8px; color: #474a5c; }
.rule { width: 1px; height: 98px; margin: 16px 6px 0 5px; background: #d2d2d2; }

.workspace { display: flex; flex: 1; }
.editor { display: flex; flex: 1; flex-direction: column; min-width: 0; }
.doctabs { height: 48px; border-bottom: 1px solid #e2e2e2; }
.doctab {
  justify-content: flex-start;
  width: 233px;
  height: 47px;
  padding-left: 16px;
  background: #d8d8d8;
  border-right: 1px solid #e2e2e2;
}
.doctab span { margin: 0 auto 0 18px; }
.doctab .dot { width: 17px; height: 17px; margin-right: 21px; border-radius: 50%; background: #5e5e5e; }
.view {
  display: grid;
  flex: 1;
  grid-template-columns: minmax(0, 1fr) 18px;
  grid-template-rows: 1fr 18px;
}
.canvas { display: flex; justify-content: center; overflow: hidden; }
.vbar, .hbar, .pv, .ph { display: flex; background: #f4f4f4; }
.vbar i, .hbar i, .pv i, .ph i { flex: 1; border-radius: 9px; background: #d2d2d2; }
.vbar { padding: 37px 0 64px; }
.hbar { padding: 0 86px 0 58px; }

/* mind map */
.map { stroke: none; fill: #404040; font: 13px/1 "Noto Sans CJK SC", sans-serif; }
.map .en { font: 11px/1 "Liberation Mono", monospace; }
.map .left { text-anchor: end; }
.lines { fill: none; stroke: #7f7f7f; stroke-width: 1; shape-rendering: crispEdges; }
.knobs { fill: #fff; stroke: #999; stroke-width: 1; }
.topics { font-size: 14px; font-weight: 700; text-anchor: middle; fill: #fff; }
.topics rect { fill: #142d6b; stroke: #5c6784; stroke-width: 1; }
.topics .root { fill: #3fb2d2; stroke: #2f8fa8; }

/* format panel */
.panel { display: flex; flex-direction: column; width: 582px; }
.panelhead { display: flex; align-items: center; justify-content: space-between; height: 48px; padding: 2px 17px 0 8px; }
h2 { font-size: 29px; }
.panelbody {
  display: grid;
  flex: 1;
  grid-template-columns: 64px 1fr 18px;
  grid-template-rows: 1fr 18px;
}
.side { display: flex; flex-direction: column; grid-row: 1 / 3; gap: 36px; padding: 30px 2px 0; }
.side button { height: 60px; }
.side .active { background: #d9d9d9; }
.props { padding: 0 15px 0 12px; margin-top: 30px; border-left: 1px solid #dfdfdf; }
.cells { display: grid; grid-template-columns: repeat(4, 1fr); height: 60px; }
.cells.first { height: 83px; padding-bottom: 13px; border-bottom: 1px dashed #ccc; }
.cells button { justify-content: flex-start; padding-left: 35px; gap: 18px; }
.cells span { display: flex; justify-content: center; width: 42px; }
.c { color: #7f7f7f; }
.dim { color: #8c8c8c; }
.cells .aa { font: 38px/40px "Liberation Sans", sans-serif; -webkit-text-stroke: 1px #404040; }
.props section { height: 190px; }
.props .first + section { margin-top: 54px; }
h3 { margin-bottom: 15px; font-size: 27px; font-weight: 700; }
.props .tight { height: 192px; }
.tight h3 { margin-bottom: 10px; }
.segs { display: inline-flex; margin-left: 20px; padding-right: 3px; border: 1px solid #f1f1f1; }
.segs button { width: 108px; height: 70px; }
.segs .on { background: #e0e0e0; }
.d1, .d2, .d3, .d4 { stroke: none; fill: #404040; }
.d2 { fill: #626262; }
.d3 { fill: #7d7b7b; }
.d4 { fill: #adadad; }
.pv { padding-bottom: 74px; }
.ph { grid-column: 2; padding: 0 18px 0 12px; border-left: 1px solid #dfdfdf; }

/* status bar */
.status {
  display: flex;
  align-items: center;
  height: 64px;
  border-top: 1px solid #dfdfdf;
}
.status svg { stroke-width: 2; }
.status > .bar { width: 1px; height: 42px; background: #d2d2d2; }
.pagesicon { width: 94px; }
.pagesel { display: flex; align-items: center; justify-content: space-between; width: 213px; padding: 0 12px 0 10px; }
.pagesel select { width: 160px; padding: 0; border: 0; background: none; appearance: none; }
.add { width: 84px; }
.pagetab { width: 156px; font-weight: 700; color: #23a07a; }
.count { display: flex; gap: 7px; margin: 0 112px 0 auto; }
.zoomtools { display: flex; align-items: center; padding-right: 46px; }
.zoomtools > button:first-child { margin-right: 42px; }
.zoomer { display: flex; align-items: center; gap: 10px; margin: 0 28px 0 38px; color: #808080; }
.zoomer input { width: 186px; height: 22px; margin: 0; appearance: none; background: linear-gradient(#999, #999) center / 100% 2px no-repeat; }
.zoomer input::-webkit-slider-thumb { appearance: none; width: 10px; height: 22px; border: 1px solid #808080; background: #fff; }
.percent { gap: 20px; margin-right: 33px; }
.z1 { margin-right: 42px; }
.status .grip { align-self: flex-end; margin: 0 2px 2px 0; fill: #bbb; stroke: none; }
```
